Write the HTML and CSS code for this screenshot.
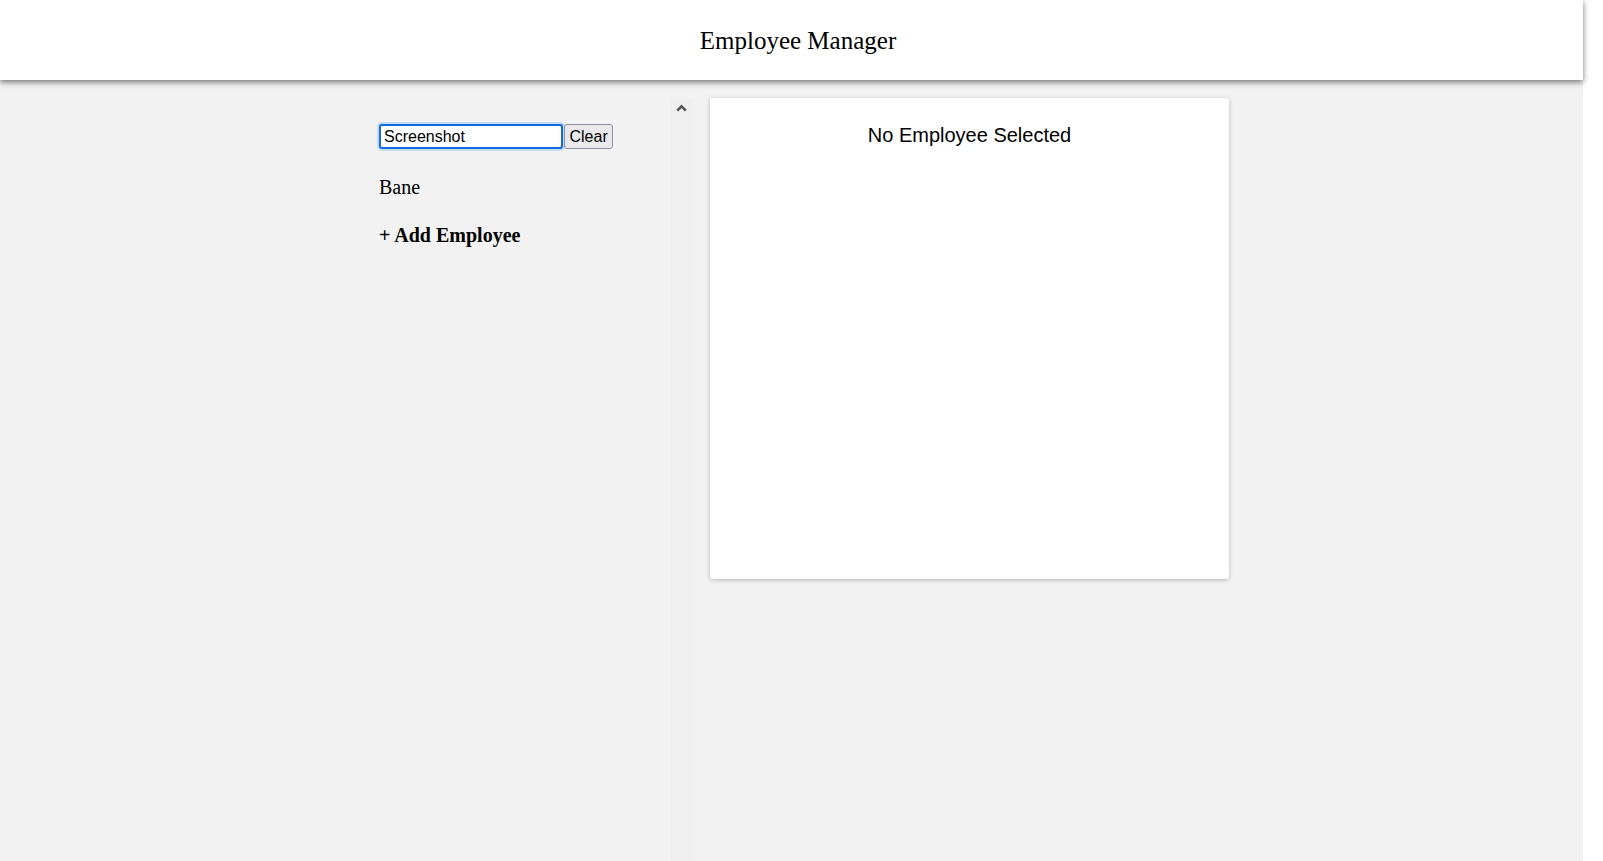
FILE: index.html
```html
<!DOCTYPE html>
<html lang="en">
<head>
<meta charset="utf-8">
<title>Employee Manager</title>
<link rel="stylesheet" href="styles.css">
</head>
<body>
<div class="app">
  <header class="app-header">
    <h1 class="app-title">Employee Manager</h1>
  </header>
  <main class="app-main">
    <aside class="sidebar">
      <div class="sidebar-content">
        <div class="search-row"><input class="search-input" type="text" value="Screenshot"><button class="clear-btn" type="button">Clear</button></div>
        <div class="employee-item">Bane</div>
        <div class="add-employee">+ Add Employee</div>
      </div>
      <div class="scroll-track">
        <svg class="scroll-arrow" width="11" height="8" viewBox="0 0 11 8"><path d="M1.2 6.6 L5.5 2.3 L9.8 6.6" fill="none" stroke="#555555" stroke-width="2.6" stroke-linejoin="miter"/></svg>
      </div>
    </aside>
    <section class="detail-card">
      <h2 class="detail-empty">No Employee Selected</h2>
    </section>
  </main>
</div>
</body>
</html>
```
FILE: styles.css
```css
html, body {
  margin: 0;
  padding: 0;
  background: #ffffff;
  height: 100%;
}

.app {
  width: 1583px;
  min-height: 100vh;
  background: #f2f2f2;
  display: flex;
  flex-direction: column;
}

.app-header {
  box-sizing: border-box;
  height: 80px;
  background: #ffffff;
  display: flex;
  align-items: center;
  justify-content: center;
  padding: 2px 0 0 13px;
  box-shadow: 0 2px 6px rgba(0, 0, 0, 0.55);
  position: relative;
  z-index: 2;
}

.app-title {
  margin: 0;
  font-family: "Liberation Serif", "Times New Roman", serif;
  font-weight: normal;
  font-size: 25px;
  color: #000;
}

.app-main {
  flex: 1;
  display: flex;
  align-items: flex-start;
  padding: 18px 0 0 379px;
  gap: 17px;
}

.sidebar {
  width: 314px;
  align-self: stretch;
  display: flex;
}

.sidebar-content {
  flex: 1;
  padding-top: 26px;
  font-family: "Liberation Serif", "Times New Roman", serif;
  font-size: 20px;
  color: #000;
}

.search-row {
  display: flex;
  gap: 1px;
  height: 25px;
}

.search-input {
  box-sizing: border-box;
  width: 184px;
  height: 25px;
  margin: 0;
  padding: 0 3px;
  border: 2px solid #1769e0;
  border-radius: 3px;
  box-shadow: 0 0 0 2px #c2dcf6;
  outline: none;
  background: #fff;
  font-family: "Liberation Sans", Arial, sans-serif;
  font-size: 16px;
  color: #000;
}

.clear-btn {
  box-sizing: border-box;
  height: 25px;
  margin: 0;
  padding: 0 4.5px;
  border: 1px solid #8f8f9d;
  border-radius: 3px;
  background: #e9e9ed;
  font-family: "Liberation Sans", Arial, sans-serif;
  font-size: 16px;
  color: #000;
}

.employee-item {
  margin-top: 27px;
  line-height: 23px;
}

.add-employee {
  margin-top: 25px;
  line-height: 23px;
  font-weight: bold;
}

.scroll-track {
  width: 22px;
  background: #efefef;
  display: flex;
  justify-content: center;
  padding: 6px 1px 0 0;
  box-sizing: border-box;
}

.scroll-arrow {
  display: block;
}

.detail-card {
  box-sizing: border-box;
  width: 519px;
  height: 481px;
  background: #ffffff;
  border-radius: 3px;
  box-shadow: 0 1px 4px rgba(0, 0, 0, 0.25);
  padding-top: 26px;
}

.detail-empty {
  margin: 0;
  text-align: center;
  font-family: "Liberation Sans", Arial, sans-serif;
  font-weight: normal;
  font-size: 20px;
  line-height: 23px;
  color: #000;
}
```
